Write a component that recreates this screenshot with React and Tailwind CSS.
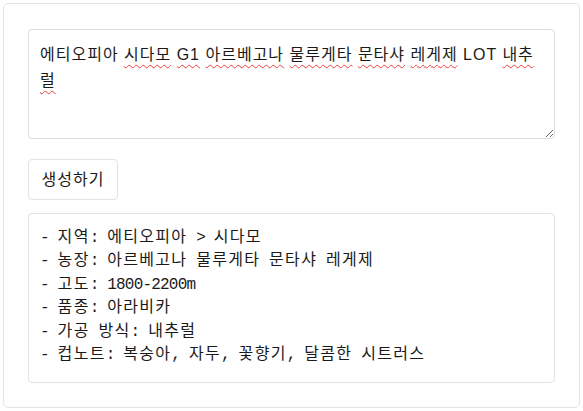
import React from 'react';

const lines = [
  '- 지역: 에티오피아 > 시다모',
  '- 농장: 아르베고나 물루게타 문타샤 레게제',
  '- 고도: 1800-2200m',
  '- 품종: 아라비카',
  '- 가공 방식: 내추럴',
  '- 컵노트: 복숭아, 자두, 꽃향기, 달콤한 시트러스',
];

// hangul runs get wider spacing so they sit in double-width cells
const MonoLine = ({ text }) => {
  const parts = text.split(/([\u3131-\uD79D]+)/).filter(Boolean);
  return (
    <div>
      {parts.map((p, i) =>
        /[\u3131-\uD79D]/.test(p) ? (
          <span key={i} className="tracking-[1.3px]">{p}</span>
        ) : (
          <span key={i}>{p}</span>
        )
      )}
    </div>
  );
};

const Wavy = ({ children }) => (
  <span className="underline decoration-wavy decoration-[#f23c3c] decoration-1 underline-offset-[4px]">{children}</span>
);

export default function App() {
  return (
    <div className="bg-white p-[3px]" style={{ fontFamily: '"Liberation Sans", "Noto Sans CJK KR", sans-serif' }}>
      <div className="border border-[#e3e3e3] rounded-[5px] px-6 pt-[25px] pb-[24px]">
        {/* Input */}
        <div className="h-[110px] border border-[#dedede] rounded-[4px] pl-[11px] pr-[14px] pt-[12px] text-base leading-[26px] tracking-[1px] text-[#1a1a1a] resize-y overflow-auto">
          에티오피아 <Wavy>시다모</Wavy> <Wavy>G1</Wavy> <Wavy>아르베고나</Wavy> <Wavy>물루게타</Wavy> <Wavy>문타샤</Wavy> <Wavy>레게제</Wavy> LOT <Wavy>내추럴</Wavy>
        </div>

        <button className="mt-5 h-[41px] w-[90px] border border-[#e3e3e3] rounded-[4px] bg-white text-base tracking-[1px] text-[#1a1a1a]">
          생성하기
        </button>

        {/* Result */}
        <div
          className="mt-[13px] border border-[#e3e3e3] rounded-[4px] px-[11px] pt-[13px] pb-[15px] text-base leading-[23.4px] tracking-[-0.8px] text-[#1a1a1a] whitespace-pre-wrap"
          style={{ fontFamily: '"Liberation Mono", "Noto Sans CJK KR", monospace' }}
        >
          {lines.map((l, i) => (
            <MonoLine key={i} text={l} />
          ))}
        </div>
      </div>
    </div>
  );
}
